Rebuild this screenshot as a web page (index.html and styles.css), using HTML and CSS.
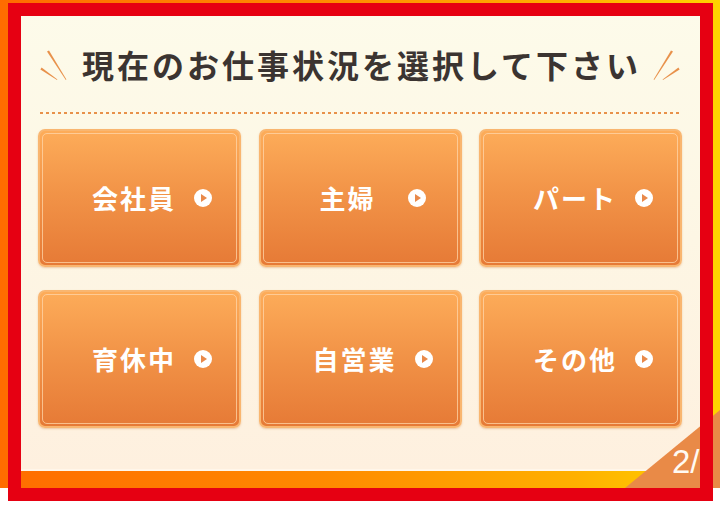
FILE: index.html
```html
<!DOCTYPE html>
<html lang="ja">
<head>
<meta charset="utf-8">
<title>お仕事状況</title>
<link rel="stylesheet" href="styles.css">
</head>
<body>
<div class="stage">
  <div class="panel">
    <div class="head">
      <svg class="spark" width="30" height="32" viewBox="0 0 30 32"><path d="M8 2.6 L10 1.4 L27.4 30.6 L26.8 31 Z" fill="#e8914a"/><path d="M1.4 20.6 L2.6 18.6 L18.4 30.4 L18 31 Z" fill="#e8914a"/></svg>
      <h1 class="title">現在のお仕事状況を選択して下さい</h1>
      <svg class="spark flip" width="30" height="32" viewBox="0 0 30 32"><path d="M8 2.6 L10 1.4 L27.4 30.6 L26.8 31 Z" fill="#e8914a"/><path d="M1.4 20.6 L2.6 18.6 L18.4 30.4 L18 31 Z" fill="#e8914a"/></svg>
    </div>
    <div class="dots"></div>
    <div class="grid">
      <a class="btn"><span class="label">会社員</span><span class="go"></span></a>
      <a class="btn"><span class="label label-short">主婦</span><span class="go"></span></a>
      <a class="btn"><span class="label">パート</span><span class="go"></span></a>
      <a class="btn"><span class="label">育休中</span><span class="go"></span></a>
      <a class="btn"><span class="label">自営業</span><span class="go"></span></a>
      <a class="btn"><span class="label">その他</span><span class="go"></span></a>
    </div>
  </div>
  <div class="corner"></div>
  <div class="pager">2/</div>
</div>
<div class="frame"></div>
</body>
</html>
```
FILE: styles.css
```css
html, body {
  margin: 0;
  padding: 0;
  background: #ffffff;
}
body {
  width: 720px;
  height: 505px;
  position: relative;
  overflow: hidden;
  font-family: "Noto Sans CJK JP", "Noto Sans", sans-serif;
}
.stage {
  position: relative;
  width: 720px;
  height: 488px;
  box-sizing: border-box;
  padding: 10px 14px 17px 14px;
  background: linear-gradient(90deg, #ff6c00 0%, #ff8a00 45%, #ffb000 80%, #ffd400 100%);
}
.panel {
  height: 100%;
  box-sizing: border-box;
  background: linear-gradient(180deg, #fdfbea 0%, #fdf6e4 50%, #fef0df 100%);
  border-bottom: 2px solid #fff6ea;
  padding-top: 14px;
  display: flex;
  flex-direction: column;
}
.head {
  height: 80px;
  display: flex;
  align-items: center;
  justify-content: center;
  gap: 13px;
}
.spark { display: block; margin-top: 1px; }
.spark.flip { transform: scaleX(-1); }
.title {
  margin: 0;
  font-size: 32px;
  font-weight: 700;
  color: #3b3431;
  letter-spacing: 3px;
  line-height: 1;
  margin-right: -3px;
}
.dots {
  margin: 8px 26px 0 26px;
  height: 2px;
  background: repeating-linear-gradient(90deg, #e8914a 0 3px, transparent 3px 6px);
}
.grid {
  margin: 15px 0 0 24px;
  display: grid;
  grid-template-columns: repeat(3, 203px);
  grid-auto-rows: 138px;
  column-gap: 17.5px;
  row-gap: 23px;
}
.btn {
  position: relative;
  box-sizing: border-box;
  border: 2px solid #f9b670;
  border-radius: 7px;
  background: linear-gradient(180deg, #fdac59 0%, #f29448 45%, #e67a36 100%);
  box-shadow: 0 1px 2px rgba(210, 120, 50, 0.35);
  display: flex;
  align-items: center;
  justify-content: center;
  padding-left: 25px;
  gap: 18px;
  color: #ffffff;
  text-decoration: none;
}
.btn::before {
  content: "";
  position: absolute;
  inset: 2px;
  border: 1px solid rgba(255, 214, 170, 0.75);
  border-radius: 5px;
  pointer-events: none;
}
.label {
  font-size: 26px;
  font-weight: 700;
  letter-spacing: 2px;
  line-height: 1;
  white-space: nowrap;
}
.label-short {
  padding-right: 14px;
}
.go {
  position: relative;
  width: 18px;
  height: 18px;
  border-radius: 50%;
  background: #ffffff;
  flex: none;
}
.go::after {
  content: "";
  position: absolute;
  left: 7px;
  top: 5px;
  border-left: 6px solid #e9894a;
  border-top: 4px solid transparent;
  border-bottom: 4px solid transparent;
}
.corner {
  position: absolute;
  right: 0;
  bottom: 0;
  width: 95px;
  height: 78px;
  background: #e98a47;
  clip-path: polygon(0 100%, 100% 0, 100% 100%);
}
.pager {
  position: absolute;
  left: 672px;
  top: 442px;
  font-family: "Liberation Sans", Arial, sans-serif;
  font-size: 33px;
  line-height: 40px;
  color: #fffaf2;
}
.frame {
  position: absolute;
  left: 8px;
  top: 3px;
  width: 705px;
  height: 498px;
  box-sizing: border-box;
  border: 13px solid #e60012;
  pointer-events: none;
}
```
